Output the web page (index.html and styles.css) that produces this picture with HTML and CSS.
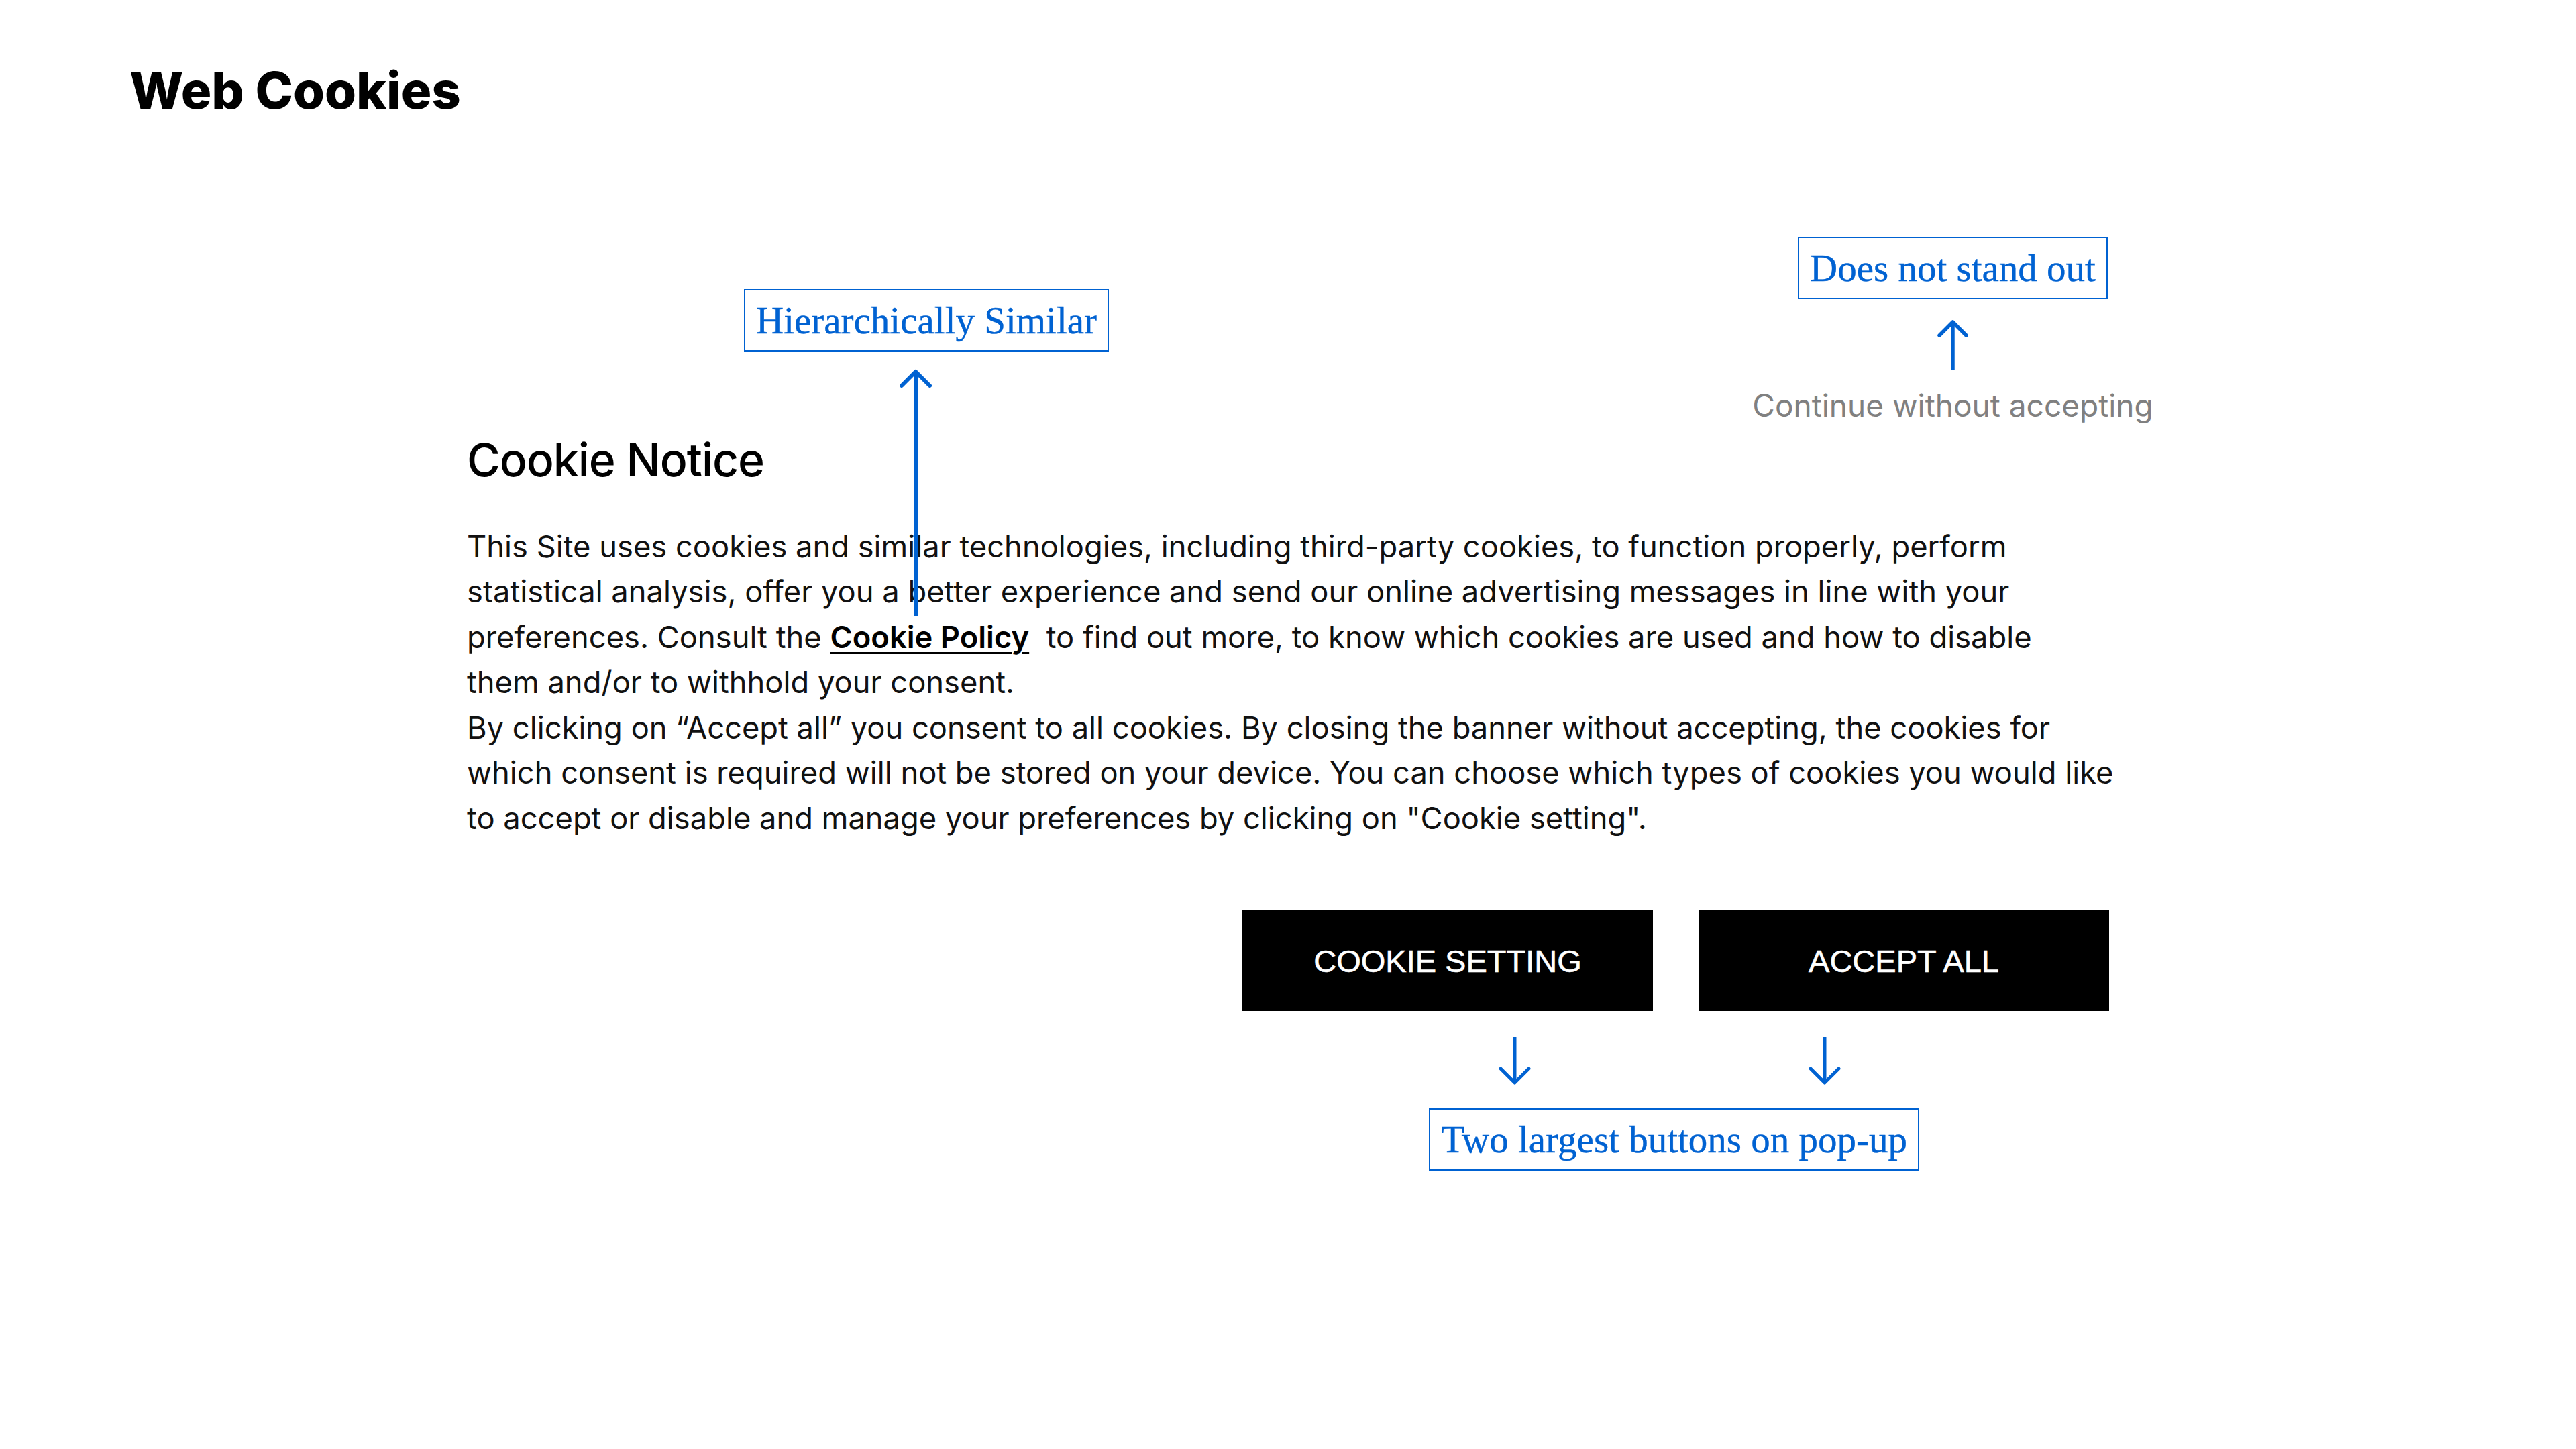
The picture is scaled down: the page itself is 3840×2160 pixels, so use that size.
FILE: index.html
```html
<!DOCTYPE html>
<html lang="en">
<head>
<meta charset="utf-8">
<title>Web Cookies</title>
<link rel="stylesheet" href="styles.css">
</head>
<body>
<header class="top">
  <h1 class="page-title">Web Cookies</h1>
</header>
<section class="banner">
  <div class="note note-hier">Hierarchically Similar</div>
  <svg class="arrow-hier" viewBox="0 0 48 370" aria-hidden="true">
    <line x1="24" y1="5" x2="24" y2="370" stroke="#0062d2" stroke-width="6"/>
    <polyline points="3,26 24,5 45,26" fill="none" stroke="#0062d2" stroke-width="6" stroke-linecap="round" stroke-linejoin="round"/>
  </svg>

  <div class="banner-top">
    <div class="skip-col">
      <div class="note">Does not stand out</div>
      <svg class="arrow-up" viewBox="0 0 48 76" aria-hidden="true">
        <line x1="24" y1="5" x2="24" y2="76" stroke="#0062d2" stroke-width="5.5"/>
        <polyline points="4,25 24,5 44,25" fill="none" stroke="#0062d2" stroke-width="5.5" stroke-linecap="round" stroke-linejoin="round"/>
      </svg>
      <a class="skip-link" href="#">Continue without accepting</a>
    </div>
  </div>

  <h2 class="notice-title">Cookie Notice</h2>
  <div class="notice-text">
    <p>This Site uses cookies and similar technologies, including third-party cookies, to function properly, perform<br>statistical analysis, offer you a better experience and send our online advertising messages in line with your<br>preferences. Consult the <a class="policy" href="#">Cookie Policy</a>&nbsp; to find out more, to know which cookies are used and how to disable<br>them and/or to withhold your consent.</p>
    <p>By clicking on “Accept all” you consent to all cookies. By closing the banner without accepting, the cookies for<br>which consent is required will not be stored on your device. You can choose which types of cookies you would like<br>to accept or disable and manage your preferences by clicking on "Cookie setting".</p>
  </div>

  <div class="actions">
    <button class="btn" type="button">COOKIE SETTING</button>
    <button class="btn" type="button">ACCEPT ALL</button>
  </div>

  <div class="bottom-notes">
    <div class="bottom-col">
      <div class="arrow-row">
        <svg class="arrow-down" viewBox="0 0 48 73" aria-hidden="true">
          <line x1="24" y1="0" x2="24" y2="68" stroke="#0062d2" stroke-width="5"/>
          <polyline points="3,47 24,68 45,47" fill="none" stroke="#0062d2" stroke-width="5" stroke-linecap="round" stroke-linejoin="round"/>
        </svg>
        <svg class="arrow-down" viewBox="0 0 48 73" aria-hidden="true">
          <line x1="24" y1="0" x2="24" y2="68" stroke="#0062d2" stroke-width="5"/>
          <polyline points="3,47 24,68 45,47" fill="none" stroke="#0062d2" stroke-width="5" stroke-linecap="round" stroke-linejoin="round"/>
        </svg>
      </div>
      <div class="note">Two largest buttons on pop-up</div>
    </div>
  </div>
</section>
</body>
</html>
```

FILE: styles.css
```css
html, body {
  margin: 0;
  padding: 0;
  background: #ffffff;
}

body {
  width: 3840px;
  height: 2160px;
  overflow: hidden;
  font-family: Inter, "Liberation Sans", sans-serif;
  color: #111111;
}

.top {
  padding: 96px 0 0 193px;
}

.page-title {
  margin: 0;
  font-size: 76px;
  line-height: 76px;
  font-weight: 800;
  color: #000000;
}

.banner {
  position: relative;
  margin: 181px 0 0 696px;
  width: 2448px;
}

.note {
  border: 2px solid #0062d2;
  color: #0062d2;
  font-family: "Liberation Serif", "Times New Roman", serif;
  font-size: 57px;
  line-height: 89px;
  padding: 0 16px;
  white-space: nowrap;
  -webkit-text-stroke: 0.4px #0062d2;
}

.note-hier {
  position: absolute;
  left: 413px;
  top: 78px;
}

.arrow-hier {
  position: absolute;
  left: 645px;
  top: 196px;
  width: 48px;
  height: 370px;
}

.banner-top {
  display: flex;
  justify-content: flex-end;
}

.skip-col {
  width: 466px;
  display: flex;
  flex-direction: column;
  align-items: center;
}

.arrow-up {
  display: block;
  margin-top: 29px;
  width: 48px;
  height: 76px;
}

.skip-link {
  margin-top: 20px;
  font-size: 46px;
  line-height: 67.5px;
  color: #808080;
  white-space: nowrap;
  text-decoration: none;
}

.notice-title {
  margin: 4px 0 0;
  font-size: 68px;
  line-height: 84px;
  font-weight: 500;
  letter-spacing: -1.1px;
  color: #000000;
}

.notice-text {
  margin-top: 54px;
  font-size: 45.3px;
  line-height: 67.5px;
  white-space: nowrap;
}

.notice-text p {
  margin: 0;
}

.policy {
  color: #000000;
  font-weight: 600;
  text-decoration: underline;
  text-decoration-thickness: 3px;
  text-underline-offset: 6px;
}

.actions {
  display: flex;
  justify-content: flex-end;
  gap: 68px;
  margin-top: 104px;
}

.btn {
  width: 612px;
  height: 150px;
  padding: 0;
  border: 0;
  background: #000000;
  color: #ffffff;
  font-family: "Liberation Sans", Arial, sans-serif;
  font-size: 47px;
  -webkit-text-stroke: 0.6px #ffffff;
}

.bottom-notes {
  display: flex;
  justify-content: flex-end;
  padding-right: 283px;
  margin-top: 39px;
}

.bottom-col {
  display: flex;
  flex-direction: column;
  align-items: center;
}

.arrow-row {
  display: flex;
  gap: 414px;
  margin-right: 14px;
}

.arrow-down {
  display: block;
  width: 48px;
  height: 73px;
}

.bottom-col .note {
  margin-top: 33px;
}
```
